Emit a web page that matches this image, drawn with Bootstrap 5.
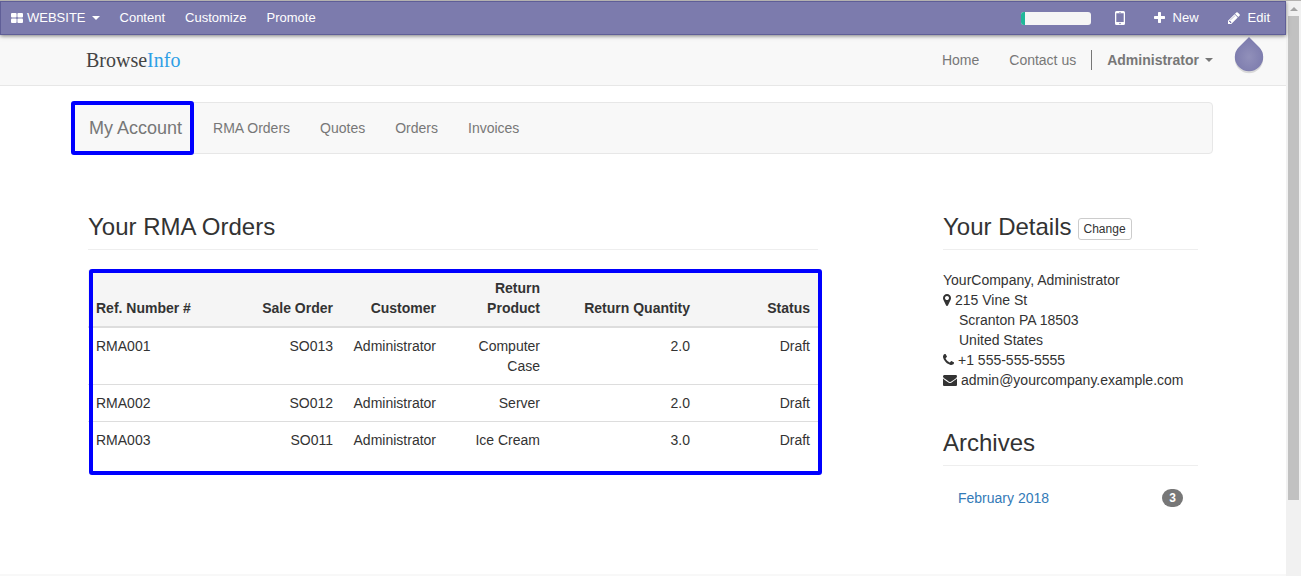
<!DOCTYPE html>
<html lang="en">
<head>
<meta charset="utf-8">
<meta name="viewport" content="width=device-width, initial-scale=1">
<title>Your RMA Orders | BrowseInfo</title>
<link href="https://cdn.jsdelivr.net/npm/bootstrap@5.3.0/dist/css/bootstrap.min.css" rel="stylesheet">
<style>
  body { font: 14px/20px "Liberation Sans", Arial, sans-serif; color: #333; background: #fff; }
  a { text-decoration: none; }
  svg { fill: currentColor; }
  .shell { border-top: 1px solid #b4b2b0; }
  .container { --bs-gutter-x: 30px; max-width: 1170px; }
  .row { --bs-gutter-x: 30px; }

  /* editor bar */
  .editor-bar { height: 34px; padding: 0 15px 0 10px; background: #7c7bad; border: 1px solid #5f5e97; font-size: 13px; box-shadow: 0 1px 4px rgba(0,0,0,.5); z-index: 2; }
  .editor-bar a, .editor-bar button { color: #fff; font-size: 13px; line-height: 20px; }
  .editor-bar button { background: none; border: 0; padding: 0; }
  .editor-menu { gap: 20px; }
  .editor-tools { gap: 29px; }
  .seo-meter { width: 70px; height: 13px; border-radius: 3px; background: #f5f5f5; margin-right: -5px; }
  .seo-meter .progress-bar { background: #21b799; }
  .caret-icon { width: 0; height: 0; margin-left: 6px; border: 4px solid transparent; border-top-color: currentColor; border-bottom: 0; }
  .tip-drop { top: 29px; left: 50%; width: 36px; height: 40px; pointer-events: none; }

  /* site header */
  .site-header { background: #f8f8f8; border-bottom: 1px solid #e7e7e7; }
  .site-header .container { height: 50px; }
  .brand-logo { font: 20px/24px "Liberation Serif", serif; color: #444; padding-left: 13px; }
  .brand-logo span { color: #2e9fe6; }
  .site-links { margin-right: -15px; }
  .site-links a, .account-bar a { color: #777; padding: 0 15px; line-height: 20px; }
  .user-item { border-left: 1px solid #777; }

  /* account bar */
  .account-bar { background: #f8f8f8; border: 1px solid #e7e7e7; border-radius: 4px; margin: 16px 0 60px; height: 52px; }
  .account-bar .account-brand { font-size: 18px; }
  .marker { border: 4px solid #00f; border-radius: 3px; pointer-events: none; }
  .marker-brand { inset: -2px 4px -2px -3px; }
  .marker-table { inset: -1px -4px -17px 1px; }
  .brand-box { height: 50px; padding-right: 1px; }

  .section-title { font-size: 24px; line-height: 26px; font-weight: 400; padding-bottom: 9px; margin: 0 0 20px; border-bottom: 1px solid #eee; }
  .btn-change { font-size: 12px; line-height: 18px; padding: 1px 5px; margin-left: 6px; border: 1px solid #ccc; border-radius: 3px; background: #fff; color: #333; }

  .orders { table-layout: fixed; width: 100%; color: #333; }
  .orders th, .orders td { padding: 8px; line-height: 20px; text-align: right; vertical-align: top; border: 0 solid #ddd; }
  .orders td { border-top-width: 1px; }
  .orders th { vertical-align: bottom; background: #f5f5f5; border-bottom-width: 2px; }
  .orders th:first-child, .orders td:first-child { text-align: left; }
  .c-ref { width: 166px; } .c-sale { width: 87px; } .c-cust { width: 103px; }
  .c-prod { width: 104px; } .c-qty { width: 150px; } .c-stat { width: 120px; }

  .contact-block { margin-bottom: 40px; }
  .contact-line { gap: 4px; }
  .indent { padding-left: 16px; }
  .archive-item { padding: 2px 15px; }
  .archive-item a { color: #337ab7; }
  .count-pill { background: #777; font-size: 12px; line-height: 12px; padding: 3px 7px; border-radius: 10px; }
  .site-footer { min-height: 2px; background: #f8f8f8; }

  /* scroll track */
  .scroll-track { width: 15px; background: #f1f1f1; padding: 0 2px; }
  .scroll-arrow { height: 15px; }
  .scroll-arrow i { border: 4px solid transparent; border-bottom-color: #a3a3a3; border-top: 0; }
  .scroll-thumb { flex: 484; background: #c1c1c1; }
  .scroll-rest { flex: 76; }
</style>
</head>
<body>
<div class="shell d-flex vh-100 overflow-hidden">
  <div class="flex-grow-1 d-flex flex-column">
    <nav class="editor-bar position-relative d-flex align-items-center justify-content-between flex-shrink-0" aria-label="Editor">
      <div class="editor-menu d-flex">
        <button type="button" class="d-flex align-items-center">
          <svg width="12" height="10" viewBox="0 0 12 10" class="me-1" aria-hidden="true"><rect width="5.6" height="4.6" rx="1"/><rect x="6.4" width="5.6" height="4.6" rx="1"/><rect y="5.4" width="5.6" height="4.6" rx="1"/><rect x="6.4" y="5.4" width="5.6" height="4.6" rx="1"/></svg>
          WEBSITE<span class="caret-icon"></span>
        </button>
        <a href="#">Content</a>
        <a href="#">Customize</a>
        <a href="#">Promote</a>
      </div>
      <div class="editor-tools d-flex align-items-center">
        <div class="progress seo-meter" role="progressbar" aria-label="Setup progress" aria-valuenow="6" aria-valuemin="0" aria-valuemax="100"><div class="progress-bar" style="width:6%"></div></div>
        <button type="button" class="d-flex" aria-label="Mobile preview">
          <svg width="10" height="14" viewBox="0 0 10 14"><path fill-rule="evenodd" d="M1.500 0h7A1.500 1.500 0 0 1 10 1.500v11A1.500 1.500 0 0 1 8.500 14h-7A1.500 1.500 0 0 1 0 12.500v-11A1.500 1.500 0 0 1 1.500 0zM1.300 2.300v8.700h7.400V2.300zM4 1v.600h2V1zM5 11.700a.8.8 0 1 0 0 1.600.8.8 0 0 0 0-1.600z"/></svg>
        </button>
        <a href="#" class="d-flex align-items-center">
          <svg width="11" height="14" viewBox="192 0 1408 1792" class="me-2" aria-hidden="true"><path d="M1600 736v192q0 40-28 68t-68 28h-416v416q0 40-28 68t-68 28h-192q-40 0-68-28t-28-68v-416h-416q-40 0-68-28t-28-68v-192q0-40 28-68t68-28h416v-416q0-40 28-68t68-28h192q40 0 68 28t28 68v416h416q40 0 68 28t28 68z"/></svg>New</a>
        <div class="position-relative">
          <a href="#" class="d-flex align-items-center">
            <svg width="12" height="14" viewBox="128 0 1536 1792" class="me-2" aria-hidden="true"><path d="M491 1536l91-91-235-235-91 91v107h128v128h107zm523-928q0-22-22-22-10 0-17 7l-542 542q-7 7-7 17 0 22 22 22 10 0 17-7l542-542q7-7 7-17zm-54-192l416 416-832 832h-416v-416zm683 96q0 53-37 90l-166 166-416-416 166-165q36-38 90-38 53 0 91 38l235 234q37 39 37 91z"/></svg>Edit</a>
          <svg class="tip-drop position-absolute translate-middle-x" viewBox="0 0 36 40" aria-hidden="true">
            <defs><radialGradient id="drop" cx="50%" cy="58%" r="55%"><stop offset="0" stop-color="#9190ba"/><stop offset="1" stop-color="#7c7bad"/></radialGradient></defs>
            <path d="M18 0L28 10A14.200 14.200 0 1 1 8 10Z" transform="translate(0 2)" fill="#000" opacity=".12"/>
            <path d="M18 0L28 10A14.200 14.200 0 1 1 8 10Z" fill="url(#drop)"/>
          </svg>
        </div>
      </div>
    </nav>

    <header class="site-header flex-shrink-0">
      <div class="container d-flex align-items-center justify-content-between">
        <a href="#" class="brand-logo">Browse<span>Info</span></a>
        <nav class="site-links d-flex" aria-label="Site">
          <a href="#">Home</a>
          <a href="#">Contact us</a>
          <a href="#" class="user-item fw-bold d-flex align-items-center">Administrator<span class="caret-icon"></span></a>
        </nav>
      </div>
    </header>

    <main class="container flex-grow-1">
      <nav class="account-bar d-flex align-items-center" aria-label="Account">
        <div class="brand-box position-relative d-flex align-items-center">
          <a href="#" class="account-brand">My Account</a>
          <span class="marker marker-brand position-absolute"></span>
        </div>
        <a href="#">RMA Orders</a>
        <a href="#">Quotes</a>
        <a href="#">Orders</a>
        <a href="#">Invoices</a>
      </nav>

      <div class="row mx-0">
        <section class="col-8">
          <h3 class="section-title">Your RMA Orders</h3>
          <div class="position-relative">
            <table class="orders">
              <colgroup><col class="c-ref"><col class="c-sale"><col class="c-cust"><col class="c-prod"><col class="c-qty"><col class="c-stat"></colgroup>
              <thead>
                <tr><th>Ref. Number #</th><th>Sale Order</th><th>Customer</th><th>Return Product</th><th>Return Quantity</th><th>Status</th></tr>
              </thead>
              <tbody>
                <tr><td>RMA001</td><td>SO013</td><td>Administrator</td><td>Computer Case</td><td>2.0</td><td>Draft</td></tr>
                <tr><td>RMA002</td><td>SO012</td><td>Administrator</td><td>Server</td><td>2.0</td><td>Draft</td></tr>
                <tr><td>RMA003</td><td>SO011</td><td>Administrator</td><td>Ice Cream</td><td>3.0</td><td>Draft</td></tr>
              </tbody>
            </table>
            <span class="marker marker-table position-absolute"></span>
          </div>
        </section>

        <aside class="col-3 offset-1">
          <h3 class="section-title d-flex align-items-end">Your Details <button type="button" class="btn-change">Change</button></h3>
          <div class="contact-block">
            <div>YourCompany, Administrator</div>
            <div class="contact-line d-flex align-items-center"><svg width="8" height="14" viewBox="384 0 1024 1792" aria-hidden="true"><path d="M1152 640q0-106-75-181t-181-75-181 75-75 181 75 181 181 75 181-75 75-181zm256 0q0 109-33 179l-364 774q-16 33-47.500 52t-67.500 19-67.500-19-46.500-52l-365-774q-33-70-33-179 0-212 150-362t362-150 362 150 150 362z"/></svg>215 Vine St</div>
            <div class="indent">Scranton PA 18503</div>
            <div class="indent">United States</div>
            <div class="contact-line d-flex align-items-center"><svg width="11" height="14" viewBox="192 0 1408 1792" aria-hidden="true"><path d="M1600 1240q0 27-10 70.500t-21 68.500q-21 50-122 106-94 51-186 51-27 0-53-3.500t-57.500-12.500-47-14.500-55.500-20.500-49-18q-98-35-175-83-127-79-264-216t-216-264q-48-77-83-175-3-9-18-49t-20.500-55.500-14.500-47-12.500-57.500-3.500-53q0-92 51-186 56-101 106-122 25-11 68.500-21t70.500-10q14 0 21 3 18 6 53 76 11 19 30 54t35 63.500 31 53.500q3 4 17.500 25t21.500 35.500 7 28.500q0 20-28.500 50t-62 55-62 53-28.500 46q0 9 5 22.500t8.500 20.500 14 24 11.500 19q76 137 174 235t235 174q2 1 19 11.500t24 14 20.500 8.500 22.500 5q18 0 46-28.500t53-62 55-62 50-28.500q14 0 28.500 7t35.500 21.500 25 17.500q25 15 53.500 31t63.500 35 54 30q70 35 76 53 3 7 3 21z"/></svg>+1 555-555-5555</div>
            <div class="contact-line d-flex align-items-center"><svg width="14" height="14" viewBox="0 0 1792 1792" aria-hidden="true"><path d="M1792 710v794q0 66-47 113t-113 47h-1472q-66 0-113-47t-47-113v-794q44 49 101 87 362 246 497 345 57 42 92.500 65.500t94.500 48 110 24.500h2q51 0 110-24.500t94.500-48 92.500-65.500q170-123 498-345 57-39 100-87zm0-294q0 79-49 151t-122 123q-376 261-468 325-10 7-42.500 31t-54 38.500-52 32.500-57.500 27-50 9h-2q-23 0-50-9t-57.500-27-52-32.500-54-38.500-42.500-31q-91-64-262-182.500t-205-142.500q-62-42-117-115.500t-55-136.500q0-78 41.500-130t118.500-52h1472q65 0 112.500 47t47.500 113z"/></svg>admin@yourcompany.example.com</div>
          </div>
          <h3 class="section-title">Archives</h3>
          <ul class="list-unstyled mb-0">
            <li class="archive-item d-flex align-items-center justify-content-between"><a href="#">February 2018</a><span class="badge count-pill">3</span></li>
          </ul>
        </aside>
      </div>
    </main>
    <footer class="site-footer"></footer>
  </div>

  <div class="scroll-track d-flex flex-column flex-shrink-0" aria-hidden="true">
    <div class="scroll-arrow d-flex align-items-center justify-content-center"><i></i></div>
    <div class="scroll-thumb"></div>
    <div class="scroll-rest"></div>
  </div>
</div>
<script src="https://cdn.jsdelivr.net/npm/bootstrap@5.3.0/dist/js/bootstrap.bundle.min.js"></script>
</body>
</html>
